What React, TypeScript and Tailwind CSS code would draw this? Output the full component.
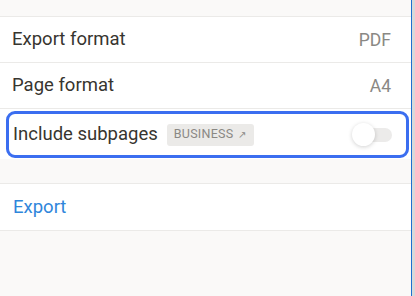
import React, { useState } from 'react';

const font = { fontFamily: 'Roboto, "Liberation Sans", sans-serif' };

const Row = ({ label, value }: { label: string; value: string }) => (
  <div className="h-[46px] flex items-center justify-between pl-3 pr-5 pt-px border-b border-[#ebeae8] bg-white">
    <span className="text-[18.5px] text-[#37352f]">{label}</span>
    <span className="text-[17.5px] text-[#8a8884]">{value}</span>
  </div>
);

const App: React.FC = () => {
  const [on, setOn] = useState(false);

  return (
    <div className="w-[415px] h-[296px] flex overflow-hidden" style={font}>
      <div className="flex-1 flex flex-col bg-[#faf9f8]">
        <div className="h-[17px] border-b border-[#ebeae8]" />
        <Row label="Export format" value="PDF" />
        <Row label="Page format" value="A4" />
        <div className="h-[50px] bg-white pl-[6px] pr-[2px] pt-[2px]">
          <div className="h-[47px] border-[3px] border-[#3b6ef0] rounded-[9px] flex items-center pl-1 pr-[14px]">
            <span className="text-[18.5px] text-[#37352f]">Include subpages</span>
            <span className="ml-[9px] h-[22px] px-[7px] rounded-[3px] bg-[#ebeae8] flex items-center gap-[5px] text-[12.5px] tracking-[0.02em] text-[#8a8884]">
              BUSINESS <span className="text-[10px]">↗</span>
            </span>
            <button
              onClick={() => setOn(!on)}
              className="ml-auto relative w-[40px] h-[23px] flex items-center"
            >
              <span className={`absolute left-[7px] right-0 h-[14px] rounded-full ${on ? 'bg-[#2383e2]' : 'bg-[#ecebea]'}`} />
              <span className={`absolute top-0 w-[23px] h-[23px] rounded-full bg-white shadow-[0_1px_4px_rgba(0,0,0,0.18)] ${on ? 'left-[17px]' : 'left-0'}`} />
            </button>
          </div>
        </div>
        <div className="h-[25px] border-b border-[#ebeae8]" />
        <div className="h-[47px] bg-white border-b border-[#ebeae8] flex items-center pl-[13px] pt-px">
          <span className="text-[18.5px] text-[#2f86db]">Export</span>
        </div>
        <div className="flex-1" />
      </div>
      <div className="w-px bg-[#1f6fcf]" />
      <div className="w-[3px] bg-[#d9d9d9]" />
    </div>
  );
};

export default App;
